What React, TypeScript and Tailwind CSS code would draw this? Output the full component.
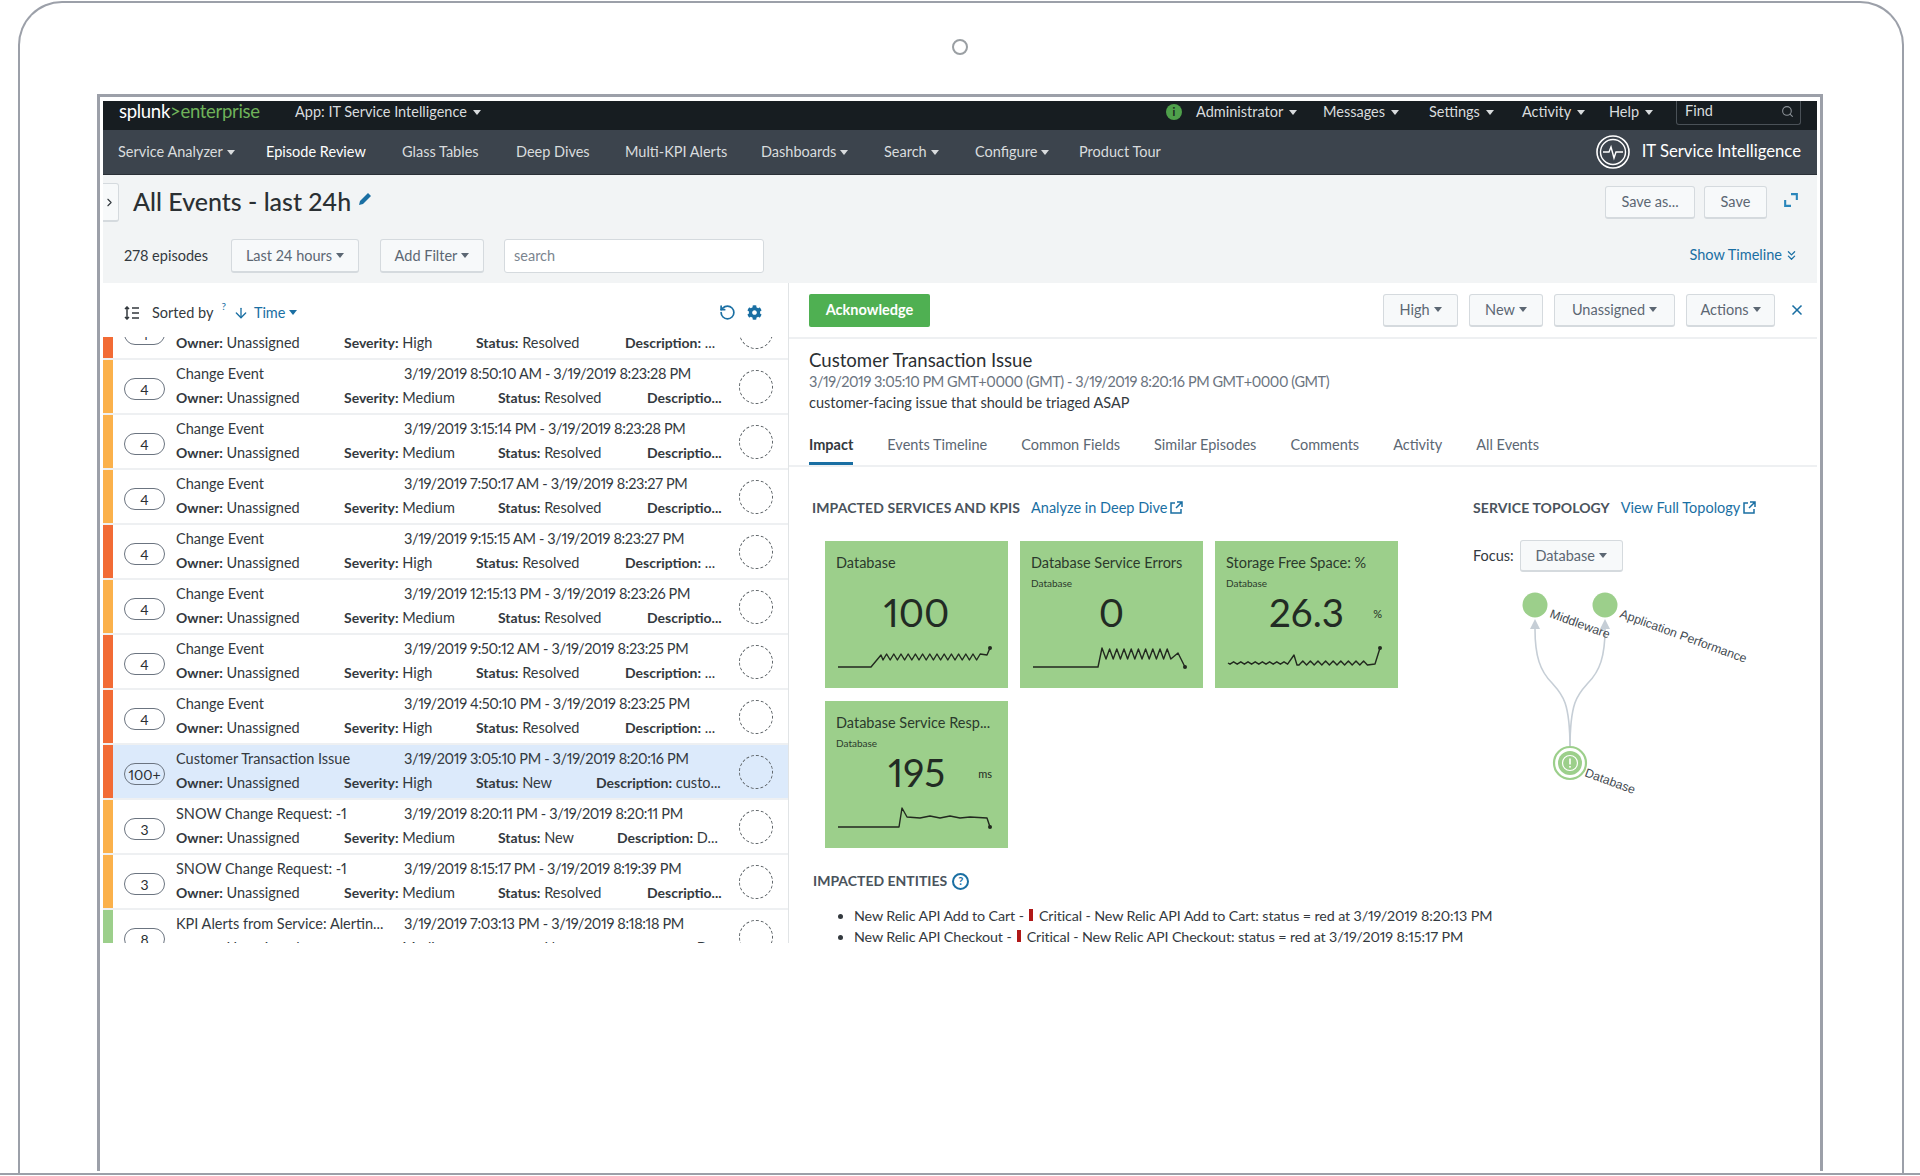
import { ChevronRight, ChevronsDown, Search, ArrowDown, RotateCcw, X } from 'lucide-react'
import { FaCog } from 'react-icons/fa'

const rows = [
  { color: 'bg-[#f26b35]', count: '4', title: 'Change Event', time: '', severity: 'High', status: 'Resolved', desc: '...', descLabel: 'Description:' },
  { color: 'bg-[#fbb14b]', count: '4', title: 'Change Event', time: '3/19/2019 8:50:10 AM - 3/19/2019 8:23:28 PM', severity: 'Medium', status: 'Resolved', desc: '', descLabel: 'Descriptio...' },
  { color: 'bg-[#fbb14b]', count: '4', title: 'Change Event', time: '3/19/2019 3:15:14 PM - 3/19/2019 8:23:28 PM', severity: 'Medium', status: 'Resolved', desc: '', descLabel: 'Descriptio...' },
  { color: 'bg-[#fbb14b]', count: '4', title: 'Change Event', time: '3/19/2019 7:50:17 AM - 3/19/2019 8:23:27 PM', severity: 'Medium', status: 'Resolved', desc: '', descLabel: 'Descriptio...' },
  { color: 'bg-[#f26b35]', count: '4', title: 'Change Event', time: '3/19/2019 9:15:15 AM - 3/19/2019 8:23:27 PM', severity: 'High', status: 'Resolved', desc: '...', descLabel: 'Description:' },
  { color: 'bg-[#fbb14b]', count: '4', title: 'Change Event', time: '3/19/2019 12:15:13 PM - 3/19/2019 8:23:26 PM', severity: 'Medium', status: 'Resolved', desc: '', descLabel: 'Descriptio...' },
  { color: 'bg-[#f26b35]', count: '4', title: 'Change Event', time: '3/19/2019 9:50:12 AM - 3/19/2019 8:23:25 PM', severity: 'High', status: 'Resolved', desc: '...', descLabel: 'Description:' },
  { color: 'bg-[#f26b35]', count: '4', title: 'Change Event', time: '3/19/2019 4:50:10 PM - 3/19/2019 8:23:25 PM', severity: 'High', status: 'Resolved', desc: '...', descLabel: 'Description:' },
  { color: 'bg-[#f26b35]', count: '100+', title: 'Customer Transaction Issue', time: '3/19/2019 3:05:10 PM - 3/19/2019 8:20:16 PM', severity: 'High', status: 'New', desc: 'custo...', descLabel: 'Description:', selected: true },
  { color: 'bg-[#fbb14b]', count: '3', title: 'SNOW Change Request: -1', time: '3/19/2019 8:20:11 PM - 3/19/2019 8:20:11 PM', severity: 'Medium', status: 'New', desc: 'D...', descLabel: 'Description:' },
  { color: 'bg-[#fbb14b]', count: '3', title: 'SNOW Change Request: -1', time: '3/19/2019 8:15:17 PM - 3/19/2019 8:19:39 PM', severity: 'Medium', status: 'Resolved', desc: '', descLabel: 'Descriptio...' },
  { color: 'bg-[#9ccf8b]', count: '8', title: 'KPI Alerts from Service: Alertin...', time: '3/19/2019 7:03:13 PM - 3/19/2019 8:18:18 PM', severity: 'Medium', status: 'New', desc: 'D...', descLabel: 'Description:' },
]

const tabs = ['Impact', 'Events Timeline', 'Common Fields', 'Similar Episodes', 'Comments', 'Activity', 'All Events']

function Caret({ className = '' }: { className?: string }) {
  return (
    <svg width="8" height="5" viewBox="0 0 8 5" className={className} fill="currentColor">
      <path d="M0 0h8L4 5z" />
    </svg>
  )
}

function LinkOut() {
  return (
    <svg width="13" height="13" viewBox="0 0 13 13" className="ml-[3px] -mt-[2px]" fill="none" stroke="#1a6fa3" strokeWidth="1.5">
      <path d="M5 2H1v10h10V8M7 1h5v5M12 1L6 7" />
    </svg>
  )
}

function Button({ label, caret, className = '' }: { label: string; caret?: boolean; className?: string }) {
  return (
    <div className={`flex items-center justify-center gap-1 rounded-[3px] border border-[#d5dade] border-b-2 bg-[#f7f9fa] text-[14.5px] text-[#5c6773] ${className}`}>
      {label}
      {caret && <Caret />}
    </div>
  )
}

function TopLink({ label, w }: { label: string; w: string }) {
  return (
    <div className={`flex items-center gap-1.5 ${w}`}>
      {label}
      <Caret />
    </div>
  )
}

function Row({ row, first }: { row: (typeof rows)[number]; first: boolean }) {
  const high = row.severity === 'High'
  const isNew = row.status === 'New'
  const severityW = high ? 'w-[132px]' : 'w-[154px]'
  const statusW = isNew ? (high ? 'w-[120px]' : 'w-[119px]') : 'w-[149px]'
  return (
    <div className={`flex h-[55px] shrink-0 border-b-2 border-[#eef0f2] ${row.selected ? 'bg-[#dceafb]' : 'bg-white'} ${first ? '-mt-[32px]' : ''}`}>
      <div className={`w-[10px] shrink-0 ${row.color}`} />
      <div className="flex w-[63px] shrink-0 items-center justify-center pt-[5px]">
        <div className="flex h-[22px] w-[41px] items-center justify-center rounded-full border border-[#6b7480] text-[14px] text-[#2b3033]">{row.count}</div>
      </div>
      <div className="w-[563px] shrink-0 pt-[2px] text-[14.5px] leading-[24px] text-[#33393e]">
        <div className="flex">
          <div className="w-[228px] shrink-0 truncate">{row.title}</div>
          <div className="whitespace-nowrap tracking-[-0.35px]">{row.time}</div>
        </div>
        <div className="flex whitespace-nowrap">
          <div className="w-[168px] shrink-0"><b className="text-[14px] font-bold">Owner:</b> Unassigned</div>
          <div className={`${severityW} shrink-0`}><b className="text-[14px] font-bold">Severity:</b> {row.severity}</div>
          <div className={`${statusW} shrink-0`}><b className="text-[14px] font-bold">Status:</b> {row.status}</div>
          <div><b className="text-[14px] font-bold">{row.descLabel}</b> {row.desc}</div>
        </div>
      </div>
      <div className="flex w-[49px] shrink-0 items-center pt-[1px]">
        <div className="h-[34px] w-[34px] rounded-full border border-dashed border-[#5c6266]" />
      </div>
    </div>
  )
}

function Tile({ title, sub, value, unit, points, end }: { title: string; sub?: string; value: string; unit?: string; points: string; end: [number, number] }) {
  return (
    <div className="relative h-[147px] w-[183px] bg-[#9ccf8b] px-[11px] pt-[12px] text-[#2b3a2c]">
      <div className="truncate whitespace-nowrap text-[14.5px] leading-[20px]">{title}</div>
      <div className="mt-[3px] h-[14px] text-[10px] leading-[14px]">{sub}</div>
      <div className="relative -mt-[1px] text-center text-[38.5px] leading-[46px] text-[#222b24]">
        {value}
        {unit && <span className="absolute right-[5px] top-[18px] text-[11px] leading-[14px]">{unit}</span>}
      </div>
      <svg width="160" height="30" viewBox="0 0 160 30" className="absolute left-[10px] top-[100px]" fill="none" stroke="#22291f" strokeWidth="1.4">
        <polyline points={points} strokeLinejoin="round" />
        <circle cx={end[0]} cy={end[1]} r="2" fill="#22291f" stroke="none" />
      </svg>
    </div>
  )
}

const zig = (x0: number, x1: number, y: number, a: number, step: number) => {
  const p: string[] = []
  let up = false
  for (let x = x0; x < x1; x += step) {
    p.push(`${x},${y + (up ? -a : a)}`)
    up = !up
  }
  return p.join(' ')
}

function Topology() {
  const label = { fontSize: 12.3, fill: '#444b52' }
  return (
    <svg width="330" height="230" viewBox="1460 580 330 230" className="-ml-[13px] mt-[9px]" fontFamily="Liberation Sans, sans-serif">
      <path d="M1570 747C1570 700 1562 693 1552 682C1540 670 1535 655 1535 628" fill="none" stroke="#c6ced6" strokeWidth="1.6" />
      <path d="M1570 747C1570 700 1578 693 1588 682C1600 670 1605 655 1605 628" fill="none" stroke="#c6ced6" strokeWidth="1.6" />
      <path d="M1535 618l-5 10h10zM1605 618l-5 10h10z" fill="#c6ced6" />
      <circle cx="1535" cy="604" r="12.5" fill="#9ccf8b" />
      <circle cx="1605" cy="604" r="12.5" fill="#9ccf8b" />
      <circle cx="1570" cy="762" r="16" fill="none" stroke="#9ccf8b" strokeWidth="2.2" />
      <circle cx="1570" cy="762" r="12" fill="#9ccf8b" />
      <circle cx="1570" cy="762" r="7.5" fill="none" stroke="#fff" strokeWidth="1.2" />
      <rect x="1569.2" y="757.5" width="1.6" height="6" fill="#fff" />
      <rect x="1569.2" y="765" width="1.6" height="1.6" fill="#fff" />
      <text x="1549" y="616" transform="rotate(20 1549 616)" {...label}>Middleware</text>
      <text x="1619" y="616" transform="rotate(20 1619 616)" {...label}>Application Performance</text>
      <text x="1584" y="775" transform="rotate(20 1584 775)" {...label}>Database</text>
    </svg>
  )
}

export default function App() {
  return (
    <div className="relative h-[1176px] w-[1920px] overflow-hidden bg-white font-['Lato','Open_Sans',sans-serif] proportional-nums">
      {/* laptop outline */}
      <div className="absolute left-[18px] right-[16px] top-[1px] h-[1173px] rounded-t-[44px] border-2 border-b-0 border-[#9ca0a9]">
        <div className="absolute left-[932px] top-[36px] h-[16px] w-[16px] rounded-full border-2 border-[#9a9fa3]" />
      </div>
      <div className="absolute left-0 top-[1173px] h-[2px] w-full bg-[#9ca0a9]" />
      <div className="absolute left-[97px] top-[94px] h-[1077px] w-[1726px] border-[3px] border-b-0 border-[#9ca0a9]" />

      <div className="absolute left-[103px] top-[101px] flex h-[842px] w-[1714px] flex-col overflow-hidden">
        {/* top bar */}
        <div className="flex h-[29px] shrink-0 items-center bg-[#171d21] pb-[7px] text-[14.5px] text-[#d9dcde]">
          <div className="ml-[16px] w-[176px] text-[18.5px] tracking-[-0.3px] text-white">splunk<span className="text-[#6fb25a]">&gt;enterprise</span></div>
          <TopLink label="App: IT Service Intelligence" w="" />
          <div className="ml-auto flex items-center">
            <div className="mr-[14px] flex h-[16px] w-[16px] items-center justify-center rounded-full bg-[#4fa04b] text-[11px] font-bold text-[#171d21]">i</div>
            <TopLink label="Administrator" w="w-[127px]" />
            <TopLink label="Messages" w="w-[106px]" />
            <TopLink label="Settings" w="w-[93px]" />
            <TopLink label="Activity" w="w-[87px]" />
            <TopLink label="Help" w="w-[67px]" />
            <div className="mr-[16px] flex h-[26px] w-[125px] items-center justify-between self-start rounded-b-[3px] border-b border-l border-r border-[#4a5157] pb-[1px] pl-[8px] pr-[6px]">
              Find
              <Search size={13} className="text-[#8b9197]" />
            </div>
          </div>
        </div>

        {/* nav bar */}
        <div className="flex h-[45px] shrink-0 items-center border-b border-[#2a3037] bg-[#3c444d] text-[14.5px] text-[#d9dcde]">
          <div className="ml-[15px] flex w-[148px] items-center gap-1">Service Analyzer <Caret /></div>
          <div className="w-[136px] text-white">Episode Review</div>
          <div className="w-[114px]">Glass Tables</div>
          <div className="w-[109px]">Deep Dives</div>
          <div className="w-[136px]">Multi-KPI Alerts</div>
          <div className="flex w-[123px] items-center gap-1">Dashboards <Caret /></div>
          <div className="flex w-[91px] items-center gap-1">Search <Caret /></div>
          <div className="flex w-[104px] items-center gap-1">Configure <Caret /></div>
          <div>Product Tour</div>
          <div className="ml-auto mr-[16px] flex items-center gap-[12px] text-[16.7px] text-white">
            <svg width="34" height="34" viewBox="0 0 34 34" fill="none" stroke="#fff">
              <circle cx="17" cy="17" r="16" strokeWidth="1.6" />
              <circle cx="17" cy="17" r="12.5" strokeWidth="1.4" />
              <path d="M7 17h6l2-5 3 11 2-6h7" strokeWidth="1.4" />
            </svg>
            IT Service Intelligence
          </div>
        </div>

        {/* page header */}
        <div className="flex h-[108px] shrink-0 flex-col bg-[#f2f4f5]">
          <div className="flex h-[64px] shrink-0 items-start">
            <div className="mt-[8px] flex h-[39px] w-[16px] items-center rounded-r-[3px] border border-b-2 border-l-0 border-[#d5dade] bg-[#f7f9fa] text-[#33393e]">
              <ChevronRight size={13} />
            </div>
            <div className="ml-[14px] mt-[11px] text-[25px] font-medium leading-[30px] text-[#2b3033]">All Events - last 24h</div>
            <svg width="12" height="12" viewBox="0 0 12 12" className="ml-[8px] mt-[18px] text-[#1a6fa3]" fill="currentColor">
              <path d="M9 0l3 3-8 8-4 1 1-4z" />
            </svg>
            <div className="ml-auto mt-[11px] flex items-start">
              <Button label="Save as..." className="h-[33px] w-[90px]" />
              <Button label="Save" className="ml-[9px] h-[33px] w-[63px]" />
              <svg width="14" height="14" viewBox="0 0 12 12" className="mr-[19px] ml-[17px] mt-[7px]" fill="none" stroke="#2a86bb" strokeWidth="1.8">
                <path d="M6 1h5v5M1 6v5h5" />
              </svg>
            </div>
          </div>
          <div className="flex h-[34px] items-center text-[14.5px] text-[#33393e]">
            <div className="ml-[21px] w-[107px]">278 episodes</div>
            <Button label="Last 24 hours" caret className="h-[34px] w-[128px]" />
            <Button label="Add Filter" caret className="ml-[21px] h-[34px] w-[104px]" />
            <div className="ml-[20px] flex h-[34px] w-[260px] items-center rounded-[3px] border border-[#d5dade] bg-white pl-[9px] text-[#7b858f]">search</div>
            <div className="ml-auto mr-[18px] flex items-center gap-[2px] pb-[2px] text-[#1a6fa3]">
              Show Timeline
              <ChevronsDown size={15} />
            </div>
          </div>
        </div>

        {/* panels */}
        <div className="flex min-h-0 flex-1">
          <div className="flex h-full w-[686px] shrink-0 flex-col border-r border-[#e1e4e6]">
            <div className="flex h-[54px] shrink-0 items-center bg-white pl-[21px] pr-[26px] pt-[5px] text-[14.5px] text-[#33393e]">
              <svg width="16" height="14" viewBox="0 0 16 14" className="mr-[12px]" fill="none" stroke="#33393e" strokeWidth="1.5">
                <path d="M3 1v12M1 3l2-2 2 2M1 11l2 2 2-2M8 2h7M8 7h7M8 12h7" />
              </svg>
              <span>Sorted by</span>
              <span className="relative -top-[6px] ml-[8px] text-[10px] text-[#1a6fa3]">?</span>
              <ArrowDown size={16} className="ml-[7px] text-[#1a6fa3]" />
              <span className="ml-[5px] text-[#1a6fa3]">Time</span>
              <Caret className="ml-[4px] text-[#1a6fa3]" />
              <div className="ml-auto flex items-center gap-[11px] text-[#1a6fa3]">
                <RotateCcw size={17} strokeWidth={2.4} />
                <FaCog size={15} />
              </div>
            </div>
            <div className="flex min-h-0 flex-1 flex-col overflow-hidden">
              {rows.map((row, i) => <Row key={i} row={row} first={i === 0} />)}
            </div>
          </div>

          <div className="min-w-0 flex-1">
            <div className="flex h-[56px] items-center border-b-2 border-[#eef0f2] pl-[20px]">
              <div className="flex h-[33px] w-[121px] items-center justify-center rounded-[2px] bg-[#4fb052] text-[14.5px] font-bold text-white">Acknowledge</div>
              <div className="ml-auto flex items-center">
                <Button label="High" caret className="h-[33px] w-[75px]" />
                <Button label="New" caret className="ml-[11px] h-[33px] w-[74px]" />
                <Button label="Unassigned" caret className="ml-[11px] h-[33px] w-[121px]" />
                <Button label="Actions" caret className="ml-[11px] h-[33px] w-[89px]" />
                <X size={16} className="ml-[14px] mr-[12px] text-[#1a6fa3]" strokeWidth={2.5} />
              </div>
            </div>

            <div className="pl-[20px] pt-[9px]">
              <div className="text-[18.6px] leading-[24px] text-[#2b3033]">Customer Transaction Issue</div>
              <div className="text-[14.5px] leading-[20px] tracking-[-0.45px] text-[#6b7480]">3/19/2019 3:05:10 PM GMT+0000 (GMT) - 3/19/2019 8:20:16 PM GMT+0000 (GMT)</div>
              <div className="mt-[1px] text-[14.5px] leading-[20px] text-[#33393e]">customer-facing issue that should be triaged ASAP</div>
            </div>

            <div className="mt-[13px] flex h-[41px] border-b-2 border-[#eef0f2] pl-[20px] pt-[8px] text-[14.5px] text-[#5c6773]">
              {tabs.map((t, i) => (
                <div key={t} className={`mr-[34px] h-[31px] ${i === 0 ? 'border-b-[3px] border-[#1a6fa3] font-bold text-[#33393e]' : ''}`}>{t}</div>
              ))}
            </div>

            <div className="flex">
              <div className="w-[684px] shrink-0 pl-[23px] pt-[31px]">
                <div className="flex items-center text-[14.5px] leading-[20px]">
                  <span className="text-[14px] font-bold tracking-[0.1px] text-[#4a535c]">IMPACTED SERVICES AND KPIS</span>
                  <span className="ml-[11px] text-[#1a6fa3]">Analyze in Deep Dive</span>
                  <LinkOut />
                </div>
                <div className="ml-[13px] mt-[23px] grid w-[573px] grid-cols-[183px_183px_183px] gap-x-[12px] gap-y-[13px]">
                  <Tile title="Database" value="100" points={`3,26 36,26 46,14 ${zig(48, 146, 16, 3, 3.6)} 152,14 155,7`} end={[155, 7]} />
                  <Tile title="Database Service Errors" sub="Database" value="0" points={`3,26 68,26 72,7 ${zig(76, 143, 13, 5, 3.6)} 148,12 155,26`} end={[155, 26]} />
                  <Tile title="Storage Free Space: %" sub="Database" value="26.3" unit="%" points={`3,22 ${zig(5, 66, 22, 1.2, 3.6)} 69,14 72,24 ${zig(74, 146, 22, 2, 3.8)} 150,23 155,7`} end={[155, 7]} />
                  <Tile title="Database Service Resp..." sub="Database" value="195" unit="ms" points="3,26 64,26 67,7 72,16 85,17 95,15 105,17 115,15 125,17 135,16 152,17 155,26" end={[155, 26]} />
                </div>
                <div className="ml-[1px] mt-[23px] flex items-center text-[14px] leading-[20px]">
                  <span className="font-bold text-[#4a535c]">IMPACTED ENTITIES</span>
                  <span className="ml-[5px] flex h-[17px] w-[17px] items-center justify-center rounded-full border-2 border-[#1a6fa3] text-[11px] font-bold text-[#1a6fa3]">?</span>
                </div>
                <ul className="ml-[42px] mt-[14px] list-disc whitespace-nowrap text-[14.3px] leading-[21px] tracking-[-0.12px] text-[#33393e]">
                  <li>New Relic API Add to Cart - <span className="mx-[2px] inline-block h-[12px] w-[4px] bg-[#b01818]" /> Critical - New Relic API Add to Cart: status = red at 3/19/2019 8:20:13 PM</li>
                  <li>New Relic API Checkout - <span className="mx-[2px] inline-block h-[12px] w-[4px] bg-[#b01818]" /> Critical - New Relic API Checkout: status = red at 3/19/2019 8:15:17 PM</li>
                </ul>
              </div>
              <div className="pt-[31px]">
                <div className="flex items-center whitespace-nowrap text-[14.5px] leading-[20px]">
                  <span className="text-[14px] font-bold tracking-[0.1px] text-[#4a535c]">SERVICE TOPOLOGY</span>
                  <span className="ml-[11px] text-[#1a6fa3]">View Full Topology</span>
                  <LinkOut />
                </div>
                <div className="mt-[22px] flex items-center text-[14.5px] text-[#33393e]">
                  Focus:
                  <Button label="Database" caret className="ml-[6px] h-[32px] w-[103px]" />
                </div>
                <Topology />
              </div>
            </div>
          </div>
        </div>
      </div>
    </div>
  )
}
